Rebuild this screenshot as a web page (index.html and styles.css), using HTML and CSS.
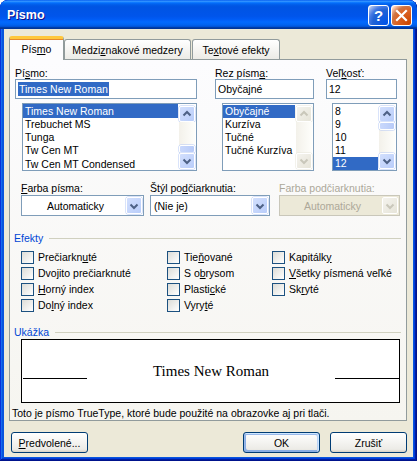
FILE: index.html
```html
<!DOCTYPE html>
<html lang="sk">
<head>
    <meta charset="UTF-8">
    <title>Písmo</title>
    <link rel="stylesheet" href="styles.css">
</head>
<body>
    <div class="window">
        <div class="titlebar">
            <span class="title">Písmo</span>
            <div class="caption-btns">
                <span class="cbtn help">?</span>
                <span class="cbtn close">
                    <svg width="13" height="13" viewBox="0 0 13 13"><path d="M2 2 L11 11 M11 2 L2 11" stroke="#fff" stroke-width="2.2" stroke-linecap="square"/></svg>
                </span>
            </div>
        </div>

        <div class="client">
            <!-- tab strip -->
            <div class="tabs">
                <div class="tab active">Pís<u>m</u>o</div>
                <div class="tab t2">Medzi<u>z</u>nakové medzery</div>
                <div class="tab t3">Te<u>x</u>tové efekty</div>
            </div>

            <div class="panel">
                <!-- font / style / size -->
                <div class="fields">
                    <div class="field col-font">
                        <div class="lbl">Pí<u>s</u>mo:</div>
                        <div class="edit"><span class="hl">Times New Roman</span></div>
                        <div class="list">
                            <ul class="rows14">
                                <li class="on">Times New Roman</li>
                                <li>Trebuchet MS</li>
                                <li>Tunga</li>
                                <li>Tw Cen MT</li>
                                <li>Tw Cen MT Condensed</li>
                            </ul>
                            <div class="vscroll">
                                <span class="sb-btn"><svg width="14" height="14" viewBox="0 0 14 14"><polyline points="3.5,8.5 7,5 10.5,8.5" fill="none" stroke="#4d6185" stroke-width="2"/></svg></span>
                                <span class="sb-track thumb-bottom"><span class="sb-thumb"></span></span>
                                <span class="sb-btn"><svg width="14" height="14" viewBox="0 0 14 14"><polyline points="3.5,5.5 7,9 10.5,5.5" fill="none" stroke="#4d6185" stroke-width="2"/></svg></span>
                            </div>
                        </div>
                    </div>

                    <div class="field col-style">
                        <div class="lbl">Rez písm<u>a</u>:</div>
                        <div class="edit">Obyčajné</div>
                        <div class="list">
                            <ul class="rows13">
                                <li class="on">Obyčajné</li>
                                <li>Kurzíva</li>
                                <li>Tučné</li>
                                <li>Tučné Kurzíva</li>
                            </ul>
                            <div class="vscroll off">
                                <span class="sb-btn"><svg width="14" height="14" viewBox="0 0 14 14"><polyline points="3.5,8.5 7,5 10.5,8.5" fill="none" stroke="#c9c7ba" stroke-width="2"/></svg></span>
                                <span class="sb-track"></span>
                                <span class="sb-btn"><svg width="14" height="14" viewBox="0 0 14 14"><polyline points="3.5,5.5 7,9 10.5,5.5" fill="none" stroke="#c9c7ba" stroke-width="2"/></svg></span>
                            </div>
                        </div>
                    </div>

                    <div class="field col-size">
                        <div class="lbl">Veľ<u>k</u>osť:</div>
                        <div class="edit">12</div>
                        <div class="list">
                            <ul class="rows13">
                                <li>8</li>
                                <li>9</li>
                                <li>10</li>
                                <li>11</li>
                                <li class="on">12</li>
                            </ul>
                            <div class="vscroll">
                                <span class="sb-btn"><svg width="14" height="14" viewBox="0 0 14 14"><polyline points="3.5,8.5 7,5 10.5,8.5" fill="none" stroke="#4d6185" stroke-width="2"/></svg></span>
                                <span class="sb-track"><span class="sb-thumb"></span></span>
                                <span class="sb-btn"><svg width="14" height="14" viewBox="0 0 14 14"><polyline points="3.5,5.5 7,9 10.5,5.5" fill="none" stroke="#4d6185" stroke-width="2"/></svg></span>
                            </div>
                        </div>
                    </div>
                </div>

                <!-- colour / underline -->
                <div class="combos">
                    <div class="cfield c1">
                        <div class="lbl"><u>F</u>arba písma:</div>
                        <div class="combo center">
                            <span class="ctext">Automaticky</span>
                            <span class="cbtn-drop"><svg width="14" height="14" viewBox="0 0 14 14"><polyline points="3.5,5.5 7,9 10.5,5.5" fill="none" stroke="#4d6185" stroke-width="2"/></svg></span>
                        </div>
                    </div>
                    <div class="cfield c2">
                        <div class="lbl">Štýl po<u>d</u>čiarknutia:</div>
                        <div class="combo">
                            <span class="ctext">(Nie je)</span>
                            <span class="cbtn-drop"><svg width="14" height="14" viewBox="0 0 14 14"><polyline points="3.5,5.5 7,9 10.5,5.5" fill="none" stroke="#4d6185" stroke-width="2"/></svg></span>
                        </div>
                    </div>
                    <div class="cfield c3">
                        <div class="lbl dis">Farba podčiarknutia:</div>
                        <div class="combo center disabled">
                            <span class="ctext">Automaticky</span>
                            <span class="cbtn-drop"><svg width="14" height="14" viewBox="0 0 14 14"><polyline points="3.5,5.5 7,9 10.5,5.5" fill="none" stroke="#c9c7ba" stroke-width="2"/></svg></span>
                        </div>
                    </div>
                </div>

                <!-- effects -->
                <div class="group g-effects"><span>Efekty</span></div>
                <div class="checks">
                    <label class="chk"><span class="box"></span>Prečiarkn<u>u</u>té</label>
                    <label class="chk"><span class="box"></span>Tie<u>ň</u>ované</label>
                    <label class="chk"><span class="box"></span>Kapitálk<u>y</u></label>
                    <label class="chk"><span class="box"></span>Dvo<u>j</u>ito prečiarknuté</label>
                    <label class="chk"><span class="box"></span>S o<u>b</u>rysom</label>
                    <label class="chk"><span class="box"></span><u>V</u>šetky písmená veľké</label>
                    <label class="chk"><span class="box"></span><u>H</u>orný index</label>
                    <label class="chk"><span class="box"></span>Plasti<u>c</u>ké</label>
                    <label class="chk"><span class="box"></span>Sk<u>r</u>yté</label>
                    <label class="chk"><span class="box"></span>Do<u>l</u>ný index</label>
                    <label class="chk"><span class="box"></span>Vyry<u>t</u>é</label>
                </div>

                <!-- preview -->
                <div class="group g-preview"><span>Ukážka</span></div>
                <div class="preview">
                    <span class="pv-line"></span>
                    <span class="pv-text">Times New Roman</span>
                    <span class="pv-line"></span>
                </div>
                <p class="note">Toto je písmo TrueType, ktoré bude použité na obrazovke aj pri tlači.</p>
            </div>

            <div class="buttons">
                <button class="btn"><u>P</u>redvolené...</button>
                <div class="btn-right">
                    <button class="btn default">OK</button>
                    <button class="btn">Zrušiť</button>
                </div>
            </div>
        </div>
    </div>
</body>
</html>
```

FILE: styles.css
```css
* {
    box-sizing: border-box;
}

body {
    margin: 0;
    font-family: "Liberation Sans", Arial, sans-serif;
    font-size: 10.5px;
    color: #000;
    background: #fff;
}

u {
    text-underline-offset: 1px;
}

/* window frame */
.window {
    width: 417px;
    height: 461px;
    display: flex;
    flex-direction: column;
    background: #0855dd;
    border-radius: 8px 8px 0 0;
    box-shadow: inset -1px -1px #00138c, inset 1px 1px #0831d9, inset -2px -2px #001ea0, inset 2px 2px #166aee, inset -3px -3px #003bda, inset 3px 3px #0855dd;
    overflow: hidden;
}

.titlebar {
    height: 29px;
    display: flex;
    align-items: center;
    justify-content: space-between;
    padding: 0 5px 0 7px;
    border-radius: 8px 8px 0 0;
    background: linear-gradient(to bottom, #0058ee 0%, #3593ff 4%, #288eff 6%, #127dff 8%, #036ffc 10%, #0262ee 14%, #0057e5 20%, #0054e3 24%, #0055eb 56%, #005bf5 66%, #026afe 76%, #0062ef 86%, #0052d6 92%, #0040ab 94%, #003092 100%);
}

.title {
    color: #fff;
    font-weight: bold;
    font-size: 12.5px;
    text-shadow: 1px 1px #0f1089;
    margin-top: 1px;
}

.caption-btns {
    display: flex;
    gap: 2px;
    margin-top: 2px;
}

.cbtn {
    width: 21px;
    height: 21px;
    border: 1px solid #fff;
    border-radius: 3px;
    display: flex;
    align-items: center;
    justify-content: center;
    color: #fff;
    font-weight: bold;
    font-size: 15px;
}

.cbtn.help {
    background: radial-gradient(circle at 90% 90%, #0054e9 0%, #2263d5 55%, #4479e4 70%, #a3bbec 90%, #fff 100%);
}

.cbtn.close {
    background: radial-gradient(circle at 90% 90%, #cc4600 0%, #dc6527 55%, #cd7546 70%, #ffccb2 90%, #fff 100%);
}

.client {
    flex: 1;
    margin: 0 4px 4px 4px;
    background: #ece9d8;
    display: flex;
    flex-direction: column;
}

/* tabs */
.tabs {
    display: flex;
    align-items: flex-end;
    height: 30px;
    padding-left: 5px;
    position: relative;
    z-index: 1;
}

.tab {
    height: 20px;
    border: 1px solid #919b9c;
    border-bottom: none;
    border-radius: 3px 3px 0 0;
    background: linear-gradient(to bottom, #fff, #ecebe6);
    display: flex;
    align-items: center;
    justify-content: center;
}

.tab.active {
    width: 55px;
    height: 24px;
    margin-bottom: -1px;
    background: #fcfcfe;
    border-top: 3px solid #ffc83c;
    box-shadow: inset 0 1px #e68b2c;
    padding-bottom: 2px;
}

.tab.t2 {
    width: 127px;
}

.tab.t3 {
    width: 88px;
    margin-left: 1px;
}

/* tab page */
.panel {
    margin-left: 5px;
    width: 398px;
    height: 362px;
    border: 1px solid #919b9c;
    background: linear-gradient(to bottom, #fcfcfe, #f6f5f0);
    padding: 7px 0 0 0;
}

.lbl {
    line-height: 12px;
    height: 12px;
    white-space: nowrap;
}

.lbl.dis {
    color: #aca899;
}

.fields {
    display: flex;
    padding-left: 5px;
}

.col-font {
    width: 182px;
}

.col-style {
    width: 99px;
    margin-left: 18px;
}

.col-size {
    width: 71px;
    margin-left: 12px;
}

.edit {
    height: 20px;
    border: 1px solid #7f9db9;
    background: #fff;
    line-height: 18px;
    padding-left: 2px;
    white-space: nowrap;
}

.edit .hl {
    background: #316ac5;
    color: #fff;
    padding: 1px 1px;
}

.list {
    height: 68px;
    margin-top: 4px;
    border: 1px solid #7f9db9;
    background: #fff;
    display: flex;
    padding: 0 1px 0 0;
}

.col-font .list {
    margin-left: 7px;
}

.col-style .list {
    margin-left: 7px;
}

.col-size .list {
    margin-left: 6px;
}

.list ul {
    flex: 1;
    margin: 0;
    padding: 0;
    list-style: none;
    overflow: hidden;
}

.list li {
    padding-left: 2px;
    white-space: nowrap;
    margin-right: 1px;
}

.rows14 li {
    height: 13.2px;
    line-height: 13px;
}

.rows14 li.on {
    height: 14px;
    line-height: 14px;
}

.rows13 {
    padding-top: 1px !important;
}

.rows13 li {
    height: 13px;
    line-height: 13px;
}

.list li.on {
    background: #316ac5;
    color: #fff;
}

/* scroll bars */
.vscroll {
    width: 16px;
    display: flex;
    flex-direction: column;
    padding: 2px 0 1px;
}

.sb-btn {
    height: 16px;
    border: 1px solid #fff;
    border-radius: 2px;
    background: linear-gradient(135deg, #d2dffd, #b9cdfa);
    box-shadow: 0 0 0 0.5px #b4c8f6;
    display: flex;
    align-items: center;
    justify-content: center;
}

.sb-track {
    flex: 1;
    display: flex;
    flex-direction: column;
    background: linear-gradient(to right, #f3f1ea, #fefefb);
}

.sb-track.thumb-bottom {
    justify-content: flex-end;
}

.sb-thumb {
    height: 8px;
    border: 1px solid #fff;
    border-radius: 2px;
    background: linear-gradient(to right, #c9d8fc, #b8cbf8);
    box-shadow: 0 0 0 0.5px #b4c8f6;
}

.vscroll.off .sb-btn {
    background: linear-gradient(135deg, #f4f3ee, #e6e4d8);
    box-shadow: 0 0 0 0.5px #e8e6da;
}

/* combos */
.combos {
    display: flex;
    margin-top: 11px;
    padding-left: 11px;
}

.c1 {
    width: 123px;
}

.c2 {
    width: 120px;
    margin-left: 6px;
}

.c3 {
    width: 121px;
    margin-left: 9px;
}

.combo {
    height: 21px;
    margin-top: 1px;
    border: 1px solid #7f9db9;
    background: #fff;
    display: flex;
    align-items: center;
}

.ctext {
    flex: 1;
    padding-left: 3px;
    white-space: nowrap;
}

.combo.center .ctext {
    text-align: center;
}

.cbtn-drop {
    width: 16px;
    height: 17px;
    margin-right: 1px;
    border: 1px solid #fff;
    border-radius: 2px;
    background: linear-gradient(135deg, #d2dffd, #b9cdfa);
    box-shadow: 0 0 0 0.5px #b4c8f6;
    display: flex;
    align-items: center;
    justify-content: center;
}

.combo.disabled {
    background: #ece9d8;
    border-color: #c9c7ba;
    color: #aca899;
}

.combo.disabled .cbtn-drop {
    background: linear-gradient(135deg, #f4f3ee, #e6e4d8);
    box-shadow: none;
}

/* group headers */
.group {
    display: flex;
    align-items: center;
    line-height: 12px;
    height: 12px;
    color: #0046d5;
    margin-left: 4px;
    width: 387px;
}

.group::after {
    content: "";
    flex: 1;
    height: 1px;
    background: #d0d0bf;
    margin-left: 6px;
}

.g-effects {
    margin-top: 16px;
}

.checks {
    display: grid;
    grid-template-columns: 146px 105px 120px;
    grid-auto-rows: 16px;
    margin-top: 5px;
    padding-left: 11px;
}

.chk {
    display: flex;
    align-items: center;
    white-space: nowrap;
}

.chk .box {
    width: 13px;
    height: 13px;
    border: 1px solid #1c5180;
    background: linear-gradient(135deg, #dcdcd7, #fff);
    margin-right: 4px;
    flex: none;
}

.g-preview {
    margin-top: 13px;
}

.preview {
    margin: 1px 0 0 11px;
    width: 379px;
    height: 64px;
    border: 1px solid #000;
    background: #fff;
    display: flex;
    align-items: center;
    justify-content: space-between;
    padding: 0 0 0 1px;
}

.pv-line {
    width: 64px;
    height: 1px;
    background: #000;
    margin-top: 14px;
}

.pv-text {
    font-family: "Liberation Serif", "Times New Roman", serif;
    font-size: 15px;
    line-height: 17px;
}

.note {
    margin: 4px 0 0 2px;
    line-height: 12px;
    white-space: nowrap;
}

/* dialog buttons */
.buttons {
    display: flex;
    justify-content: space-between;
    margin-top: 11px;
    padding: 0 6px 0 7px;
}

.btn-right {
    display: flex;
    gap: 10px;
}

.btn {
    width: 77px;
    height: 21px;
    border: 1px solid #003c74;
    border-radius: 3px;
    background: linear-gradient(to bottom, #fff, #ecebe6 86%, #d6d0c5);
    font-family: inherit;
    font-size: 10.5px;
    color: #000;
    padding: 0;
}

.btn.default {
    box-shadow: inset -1px 1px #cee7ff, inset 1px 2px #98b8ea, inset -2px 2px #bcd4f6, inset 1px -1px #89ade4, inset 2px -2px #89ade4;
}
```
